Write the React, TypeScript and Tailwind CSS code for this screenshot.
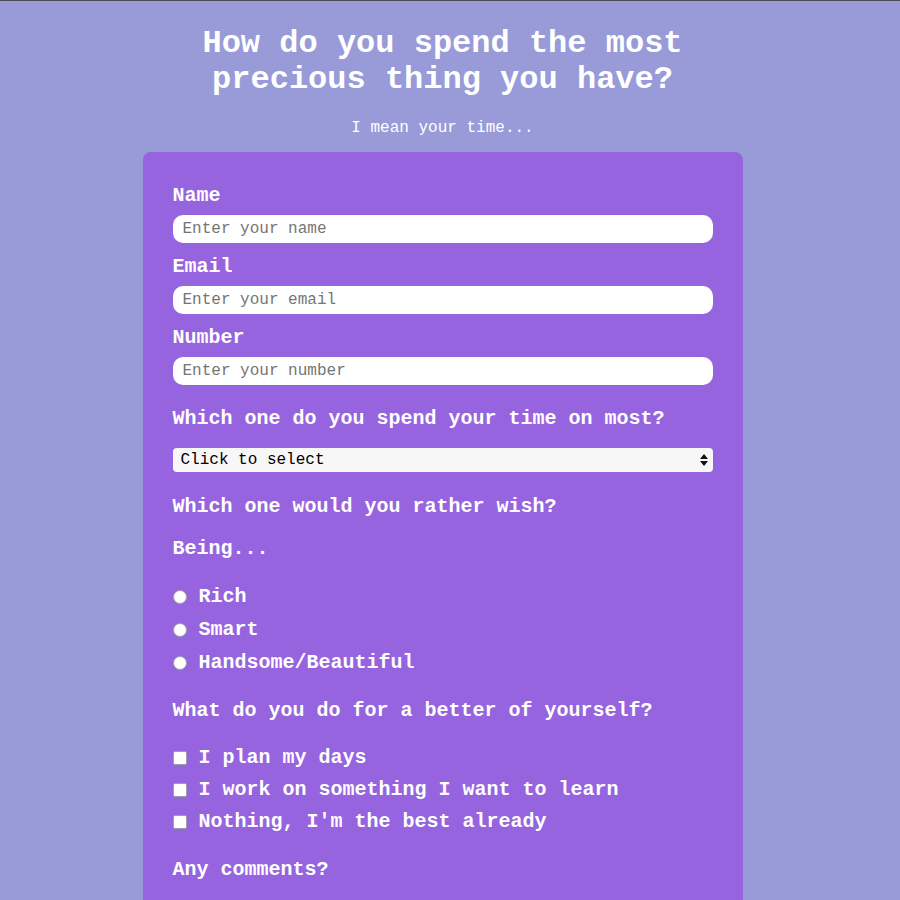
import React from 'react';

const font = { fontFamily: '"Liberation Mono", "Courier New", monospace' };

const Field = ({ label, placeholder, type = 'text' }: { label: string; placeholder: string; type?: string }) => (
  <div className="mb-[12px]">
    <label className="block text-[20px] leading-[24px] font-bold text-white">{label}</label>
    <input
      type={type}
      placeholder={placeholder}
      className="mt-[7px] block w-full h-[28px] rounded-[10px] bg-white px-[10px] text-[16px] text-black placeholder:text-[#757575] outline-none"
    />
  </div>
);

const Radio = ({ label }: { label: string }) => (
  <label className="flex items-center h-[33px] gap-[12px] text-[20px] font-bold text-white">
    <input
      type="radio"
      name="being"
      className="appearance-none w-[14px] h-[14px] rounded-full bg-white border border-[#a0a0a0] shrink-0"
    />
    {label}
  </label>
);

const Check = ({ label }: { label: string }) => (
  <label className="flex items-center h-[32px] gap-[12px] text-[20px] font-bold text-white">
    <input
      type="checkbox"
      className="appearance-none w-[14px] h-[14px] rounded-[2px] bg-white border border-[#a0a0a0] shrink-0"
    />
    {label}
  </label>
);

export default function App() {
  return (
    <div className="min-h-screen bg-[#989bd8] border-t border-[#4a4a4a] pr-[15px]" style={font}>
      <h1 className="pt-[25px] text-center text-[32px] leading-[36px] font-bold text-white">
        How do you spend the most
        <br />
        precious thing you have?
      </h1>
      <p className="mt-[20px] text-center text-[16px] leading-[20px] text-white">I mean your time...</p>

      <form className="mx-auto mt-[14px] w-[600px] rounded-[8px] bg-[#9664de] px-[30px] pt-[32px] pb-[40px]">
        <Field label="Name" placeholder="Enter your name" />
        <Field label="Email" placeholder="Enter your email" type="email" />
        <Field label="Number" placeholder="Enter your number" type="number" />

        <p className="mt-[22px] text-[20px] leading-[24px] font-bold text-white">Which one do you spend your time on most?</p>
        <div className="relative mt-[17px] h-[24px]">
          <select className="appearance-none block w-full h-[24px] rounded-[4px] bg-[#f7f7f7] pl-[8px] text-[16px] text-black outline-none" style={font}>
            <option>Click to select</option>
            <option>Work</option>
            <option>Family</option>
            <option>Friends</option>
            <option>Hobbies</option>
          </select>
          <svg className="pointer-events-none absolute right-[5px] top-[6px]" width="8" height="12" viewBox="0 0 8 12">
            <path d="M4 0 L8 5 L0 5 Z" fill="#111" />
            <path d="M0 7 L8 7 L4 12 Z" fill="#111" />
          </svg>
        </div>

        <p className="mt-[23px] text-[20px] leading-[24px] font-bold text-white">Which one would you rather wish?</p>
        <p className="mt-[18px] text-[20px] leading-[24px] font-bold text-white">Being...</p>
        <div className="mt-[19px]">
          <Radio label="Rich" />
          <Radio label="Smart" />
          <Radio label="Handsome/Beautiful" />
        </div>

        <p className="mt-[20px] text-[20px] leading-[24px] font-bold text-white">What do you do for a better of yourself?</p>
        <div className="mt-[19px]">
          <Check label="I plan my days" />
          <Check label="I work on something I want to learn" />
          <Check label="Nothing, I'm the best already" />
        </div>

        <p className="mt-[20px] text-[20px] leading-[24px] font-bold text-white">Any comments?</p>
        <textarea
          placeholder="Enter your comment here..."
          className="mt-[28px] block w-full h-[100px] rounded-[10px] bg-white p-[10px] text-[16px] placeholder:text-[#757575] outline-none"
        />
        <button type="submit" className="mt-[20px] block w-full h-[36px] rounded-[10px] bg-[#6b3fb8] text-[18px] font-bold text-white">
          Submit
        </button>
      </form>
    </div>
  );
}
